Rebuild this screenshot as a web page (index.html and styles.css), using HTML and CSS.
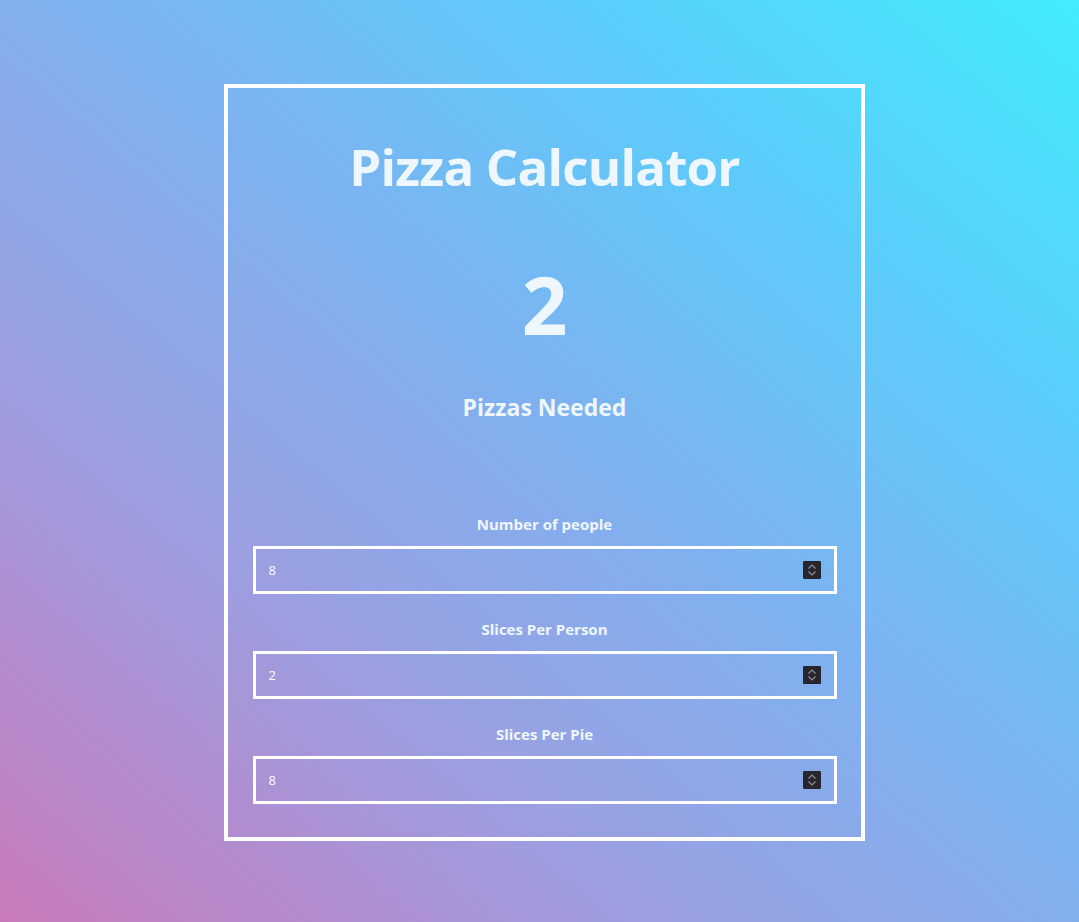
FILE: index.html
```html
<!DOCTYPE html>
<html lang="en">
<head>
<meta charset="utf-8">
<title>Pizza Calculator</title>
<link rel="stylesheet" href="styles.css">
</head>
<body>
<main class="page">
  <section class="card">
    <h1 class="title">Pizza Calculator</h1>
    <div class="result">2</div>
    <h2 class="result-label">Pizzas Needed</h2>
    <form class="fields">
      <div class="field">
        <label class="field-label" for="people">Number of people</label>
        <div class="input-wrap">
          <input class="field-input" id="people" type="number" value="8">
          <span class="spinner"><svg viewBox="0 0 18 18" width="18" height="18"><path d="M5.5 7.5 L9 4 L12.5 7.5 M5.5 10.5 L9 14 L12.5 10.5" fill="none" stroke="#8d8c97" stroke-width="1.2"/></svg></span>
        </div>
      </div>
      <div class="field">
        <label class="field-label" for="slices">Slices Per Person</label>
        <div class="input-wrap">
          <input class="field-input" id="slices" type="number" value="2">
          <span class="spinner"><svg viewBox="0 0 18 18" width="18" height="18"><path d="M5.5 7.5 L9 4 L12.5 7.5 M5.5 10.5 L9 14 L12.5 10.5" fill="none" stroke="#8d8c97" stroke-width="1.2"/></svg></span>
        </div>
      </div>
      <div class="field">
        <label class="field-label" for="pie">Slices Per Pie</label>
        <div class="input-wrap">
          <input class="field-input" id="pie" type="number" value="8">
          <span class="spinner"><svg viewBox="0 0 18 18" width="18" height="18"><path d="M5.5 7.5 L9 4 L12.5 7.5 M5.5 10.5 L9 14 L12.5 10.5" fill="none" stroke="#8d8c97" stroke-width="1.2"/></svg></span>
        </div>
      </div>
    </form>
  </section>
</main>
</body>
</html>
```
FILE: styles.css
```css
html, body {
  margin: 0;
  padding: 0;
  height: 100%;
}
body {
  background: linear-gradient(to top right, #c87abb 0%, #9c9ee0 30%, #80b0ef 52%, #5cccfb 76%, #42ebfd 100%);
  font-family: "Open Sans", "Noto Sans", sans-serif;
  color: #eef7fe;
  overflow: hidden;
}
.page {
  display: flex;
  justify-content: center;
  padding: 84px 0 0 10px;
}
.card {
  width: 633px;
  border: 4px solid #ffffff;
  padding: 46px 0 33px;
  display: flex;
  flex-direction: column;
  align-items: center;
  text-align: center;
}
.title {
  margin: 0;
  font-size: 51px;
  line-height: 64px;
  font-weight: 700;
  letter-spacing: -0.8px;
}
.result {
  margin-top: 66px;
  font-size: 80px;
  line-height: 80px;
  font-weight: 700;
}
.result-label {
  margin: 48px 0 0;
  font-size: 23px;
  line-height: 30px;
  font-weight: 700;
}
.fields {
  margin-top: 92px;
  width: 584px;
  display: flex;
  flex-direction: column;
  gap: 25px;
}
.field {
  display: flex;
  flex-direction: column;
  align-items: stretch;
  gap: 12px;
}
.field-label {
  font-size: 15px;
  line-height: 20px;
  font-weight: 700;
}
.input-wrap {
  position: relative;
  display: flex;
}
.field-input {
  box-sizing: border-box;
  height: 48px;
  width: 100%;
  margin: 0;
  border: 3px solid #ffffff;
  background: transparent;
  color: #ffffff;
  font-family: "Open Sans", sans-serif;
  font-size: 13px;
  padding: 0 13px;
  outline: none;
  -moz-appearance: textfield;
  appearance: textfield;
}
.field-input::-webkit-inner-spin-button,
.field-input::-webkit-outer-spin-button {
  -webkit-appearance: none;
  margin: 0;
}
.spinner {
  position: absolute;
  right: 16px;
  top: 15px;
  width: 18px;
  height: 18px;
  background: #27262f;
  border-radius: 1px;
  display: block;
}
.spinner svg {
  display: block;
}
```
